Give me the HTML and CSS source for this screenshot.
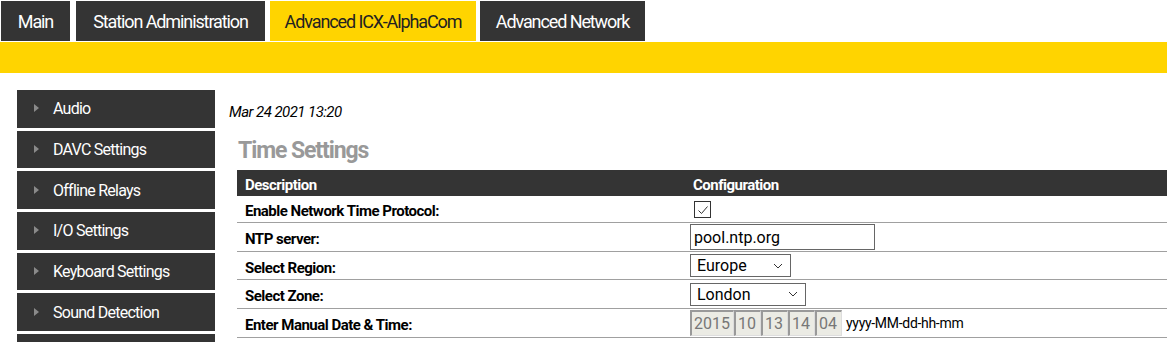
FILE: index.html
```html
<!DOCTYPE html>
<html>
<head>
<meta charset="utf-8">
<link rel="stylesheet" href="styles.css">
</head>
<body>
<nav class="tabs">
  <a class="tab tab-main">Main</a>
  <a class="tab tab-station">Station Administration</a>
  <a class="tab tab-adv active">Advanced ICX-AlphaCom</a>
  <a class="tab tab-net">Advanced Network</a>
</nav>
<div class="bar"></div>
<div class="page">
  <aside class="sidebar">
    <div class="side-item"><span class="arrow"></span>Audio</div>
    <div class="side-item"><span class="arrow"></span>DAVC Settings</div>
    <div class="side-item"><span class="arrow"></span>Offline Relays</div>
    <div class="side-item"><span class="arrow"></span>I/O Settings</div>
    <div class="side-item"><span class="arrow"></span>Keyboard Settings</div>
    <div class="side-item"><span class="arrow"></span>Sound Detection</div>
    <div class="side-item"></div>
  </aside>
  <main class="content">
    <div class="date">Mar 24 2021 13:20</div>
    <h1 class="title">Time Settings</h1>
    <div class="table">
      <div class="thead">
        <div class="th">Description</div>
        <div class="th th2">Configuration</div>
      </div>
      <div class="row r1">
        <div class="label">Enable Network Time Protocol:</div>
        <div class="val"><span class="checkbox"><svg width="12" height="10" viewBox="0 0 12 10"><path d="M1.5 5.5 L4.5 8.5 L10.5 1.5" fill="none" stroke="#333" stroke-width="1"/></svg></span></div>
      </div>
      <div class="row r2">
        <div class="label">NTP server:</div>
        <div class="val"><div class="textbox">pool.ntp.org</div></div>
      </div>
      <div class="row r3">
        <div class="label">Select Region:</div>
        <div class="val"><div class="select sel-region">Europe<svg class="chev" width="10" height="6" viewBox="0 0 10 6"><path d="M1 1 L5 5 L9 1" fill="none" stroke="#333" stroke-width="1"/></svg></div></div>
      </div>
      <div class="row r4">
        <div class="label">Select Zone:</div>
        <div class="val"><div class="select sel-zone">London<svg class="chev" width="10" height="6" viewBox="0 0 10 6"><path d="M1 1 L5 5 L9 1" fill="none" stroke="#333" stroke-width="1"/></svg></div></div>
      </div>
      <div class="row r5">
        <div class="label">Enter Manual Date &amp; Time:</div>
        <div class="val">
          <span class="dbox w-year">2015</span><span class="dbox">10</span><span class="dbox">13</span><span class="dbox">14</span><span class="dbox">04</span>
          <span class="fmt">yyyy-MM-dd-hh-mm</span>
        </div>
      </div>
    </div>
  </main>
</div>
</body>
</html>
```

FILE: styles.css
```css
* { box-sizing: border-box; }
html, body { margin: 0; padding: 0; background: #fff; overflow: hidden; }
body { font-family: Roboto, "Liberation Sans", sans-serif; color: #000; width: 1167px; height: 342px; }

.tabs { display: flex; padding: 1px 0 0 1px; height: 41px; }
.tab {
  display: flex; align-items: center; justify-content: center;
  height: 40px; background: #343434; color: #fff;
  font-size: 18px; letter-spacing: -1.1px;
}
.tab-main { width: 69px; margin-right: 6px; }
.tab-station { width: 189px; margin-right: 5px; }
.tab-adv { width: 206px; margin-right: 4px; }
.tab-net { width: 165px; }
.tab.active { background: #ffd400; color: #222; }

.bar { height: 31px; background: #ffd400; margin-top: 1px; }

.page { display: flex; padding: 17px 0 0 17px; }
.sidebar { width: 198px; flex: none; display: flex; flex-direction: column; gap: 3px; }
.side-item {
  height: 37.67px; background: #343434; color: #fff;
  display: flex; align-items: center;
  font-size: 16px; letter-spacing: -0.75px;
  padding-left: 17px;
}
.arrow {
  width: 0; height: 0; margin-right: 14px; margin-top: -1px;
  border-left: 5px solid #8a8a8a; border-top: 4px solid transparent; border-bottom: 4px solid transparent;
}

.content { flex: 1; padding-left: 14px; }
.date { font-style: italic; font-size: 15px; letter-spacing: -0.55px; margin-top: 15px; line-height: 15px; }
.title { font-size: 23px; font-weight: bold; color: #999; margin: 18px 0 0 9px; line-height: 26px; letter-spacing: -1.1px; }
.table { margin: 6px 0 0 8px; }
.thead { display: grid; grid-template-columns: 448px 1fr; background: #343434; color: #fff; height: 26px; align-items: center; }
.th { font-weight: bold; font-size: 15px; padding: 3px 0 0 8px; letter-spacing: -0.5px; }
.row { display: grid; grid-template-columns: 448px 1fr; align-items: center; border-bottom: 1px solid #a0a0a0; }
.label { font-weight: bold; font-size: 15px; padding: 4px 0 0 8px; letter-spacing: -0.5px; }
.val { padding-left: 5px; display: flex; align-items: center; }
.r1 { height: 27px; }
.r2 { height: 29px; }
.r3 { height: 28px; }
.r4 { height: 29px; }
.r5 { height: 29px; }

.checkbox { width: 17px; height: 17px; border: 1px solid #333; display: flex; align-items: center; justify-content: center; margin-left: 4px; margin-top: 1px; }
.textbox { width: 185px; height: 26px; border: 1px solid #666; font-size: 16px; padding-left: 3px; display: flex; align-items: center; }
.select { height: 23px; border: 1px solid #666; font-size: 16px; padding-left: 6px; display: flex; align-items: center; justify-content: space-between; padding-right: 7px; }
.sel-region { width: 101px; }
.sel-zone { width: 116px; }
.dbox { height: 26px; width: 27px; background: #ebebe4; border: 1px solid #a7a7a7; border-right-color: #ddd; border-bottom-color: #ddd; border-top: 2px solid #999; border-left: 2px solid #999; color: #777; font-size: 16px; display: flex; align-items: center; padding-left: 2px; }
.w-year { width: 44px; }
.fmt { font-size: 14px; margin-left: 4px; letter-spacing: -0.3px; }
```
